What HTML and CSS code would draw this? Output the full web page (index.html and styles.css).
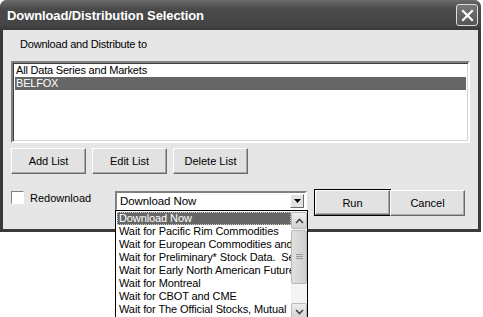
FILE: index.html
```html
<!DOCTYPE html>
<html lang="en">
<head>
    <meta charset="UTF-8">
    <title>Download/Distribution Selection</title>
    <link rel="stylesheet" href="styles.css">
</head>
<body>
    <div class="window">
        <div class="titlebar">
            <span class="title">Download/Distribution Selection</span>
            <div class="close">
                <svg width="13" height="13" viewBox="0 0 13 13"><path d="M2 2 L11 11 M11 2 L2 11" stroke="#fff" stroke-width="2.2" stroke-linecap="square"/></svg>
            </div>
        </div>
        <div class="content">
            <div class="label">Download and Distribute to</div>
            <div class="listbox">
                <div class="item">All Data Series and Markets</div>
                <div class="item selected">BELFOX</div>
            </div>
            <div class="list-buttons">
                <button>Add List</button>
                <button>Edit List</button>
                <button>Delete List</button>
            </div>
            <div class="bottom-row">
                <label class="check"><span class="box"></span>Redownload</label>
                <div class="combo">
                    <div class="combo-field">
                        <span>Download Now</span>
                        <span class="combo-btn">
                            <svg width="7" height="4" viewBox="0 0 7 4"><path d="M0 0 H7 L3.5 4 Z" fill="#000"/></svg>
                        </span>
                    </div>
                    <div class="dropdown">
                        <div class="options">
                            <div class="opt active">Download Now</div>
                            <div class="opt">Wait for Pacific Rim Commodities</div>
                            <div class="opt">Wait for European Commodities and</div>
                            <div class="opt">Wait for Preliminary* Stock Data.&nbsp; Se</div>
                            <div class="opt">Wait for Early North American Future</div>
                            <div class="opt">Wait for Montreal</div>
                            <div class="opt">Wait for CBOT and CME</div>
                            <div class="opt">Wait for The Official Stocks, Mutual</div>
                        </div>
                        <div class="scrollbar">
                            <div class="sb-btn">
                                <svg width="9" height="6" viewBox="0 0 9 6"><path d="M1 5 L4.5 1.5 L8 5" stroke="#444" stroke-width="1.6" fill="none"/></svg>
                            </div>
                            <div class="sb-thumb">
                                <svg width="7" height="6" viewBox="0 0 7 6"><path d="M0 0.5 H7 M0 2.5 H7 M0 4.5 H7" stroke="#999" stroke-width="1"/></svg>
                            </div>
                            <div class="sb-track"></div>
                            <div class="sb-btn">
                                <svg width="9" height="6" viewBox="0 0 9 6"><path d="M1 1 L4.5 4.5 L8 1" stroke="#444" stroke-width="1.6" fill="none"/></svg>
                            </div>
                        </div>
                    </div>
                </div>
                <button class="default">Run</button>
                <button>Cancel</button>
            </div>
        </div>
    </div>
</body>
</html>
```

FILE: styles.css
```css
html, body {
    margin: 0;
    min-height: 317px;
}
body {
    background-color: #fff;
    font-family: "Liberation Sans", Arial, sans-serif;
    font-size: 11px;
    color: #000;
}
.window {
    width: 475px;
    border: 3px solid #3a3a3a;
    border-top: none;
    border-radius: 7px 7px 0 0;
    background-color: #e6e6e6;
}
.titlebar {
    height: 30px;
    margin: 0 -3px;
    padding: 0 3px 0 7px;
    border-radius: 7px 7px 0 0;
    background: linear-gradient(#6a6a6a, #4a4a4a 30%, #454545 80%, #3a3a3a);
    display: flex;
    align-items: center;
    justify-content: space-between;
}
.title {
    color: #fff;
    font-weight: bold;
    font-size: 13px;
    letter-spacing: -0.1px;
}
.close {
    width: 20px;
    height: 20px;
    border: 1px solid #ddd;
    border-radius: 3px;
    background: linear-gradient(#777, #555);
    display: flex;
    align-items: center;
    justify-content: center;
}
.content {
    padding: 8px 8px 13px 8px;
}
.label {
    margin-left: 9px;
    height: 23px;
    letter-spacing: -0.2px;
}
.listbox {
    height: 76px;
    background-color: #fff;
    border: 2px solid;
    border-color: #808080 #fff #fff #808080;
    box-shadow: inset 1px 1px 0 #404040, inset -1px -1px 0 #d4d4d4;
    padding: 1px 2px;
    letter-spacing: -0.2px;
}
.item {
    height: 13px;
    line-height: 13px;
    padding-left: 1px;
}
.item.selected {
    background-color: #666;
    color: #fff;
}
.list-buttons {
    display: flex;
    gap: 6px;
    margin-top: 5px;
}
button {
    width: 75px;
    height: 26px;
    font-family: "Liberation Sans", Arial, sans-serif;
    font-size: 11px;
    color: #000;
    background-color: #e2e2e2;
    border: 1px solid;
    border-color: #fff #6a6a6a #6a6a6a #fff;
    box-shadow: inset -1px -1px 0 #a8a8a8;
    padding: 0;
}
button.default {
    height: 25px;
    outline: 1px solid #000;
    outline-offset: 0;
}
.bottom-row {
    display: flex;
    align-items: flex-start;
    margin-top: 16px;
}
.check {
    display: flex;
    align-items: center;
    gap: 6px;
    width: 104px;
    margin-top: 1px;
}
.box {
    width: 11px;
    height: 11px;
    background-color: #fff;
    border: 1px solid;
    border-color: #808080 #fff #fff #808080;
}
.combo {
    position: relative;
    width: 192px;
    margin-right: 8px;
    margin-top: 1px;
}
.combo-field {
    height: 16px;
    background-color: #fff;
    border: 2px solid;
    border-color: #808080 #fff #fff #808080;
    display: flex;
    align-items: center;
    justify-content: space-between;
    padding-left: 3px;
    font-size: 11.5px;
    letter-spacing: -0.1px;
}
.combo-btn {
    width: 14px;
    height: 14px;
    margin-right: 1px;
    background-color: #e2e2e2;
    border: 1px solid;
    border-color: #fff #6a6a6a #6a6a6a #fff;
    box-sizing: border-box;
    display: flex;
    align-items: center;
    justify-content: center;
}
.dropdown {
    position: absolute;
    left: 0;
    top: 19px;
    width: 191px;
    height: 110px;
    background-color: #fff;
    border: 1px solid #000;
    display: flex;
    font-size: 11px;
    letter-spacing: -0.1px;
    z-index: 2;
}
.options {
    flex: 1;
    padding: 1px 0 0 1px;
    overflow: hidden;
    white-space: nowrap;
}
.opt {
    height: 13px;
    line-height: 13px;
    padding-left: 2px;
}
.opt.active {
    background-color: #666;
    color: #fff;
    outline: 1px dotted #ccc;
    outline-offset: -1px;
}
.scrollbar {
    width: 16px;
    display: flex;
    flex-direction: column;
    background-color: #f4f4f4;
}
.sb-btn {
    height: 15px;
    margin: 1px 0;
    background: linear-gradient(#eee, #d0d0d0);
    border: 1px solid #bbb;
    border-radius: 2px;
    display: flex;
    align-items: center;
    justify-content: center;
}
.sb-thumb {
    height: 52px;
    background: linear-gradient(90deg, #e0e0e0, #cfcfcf);
    border: 1px solid #b8b8b8;
    border-radius: 2px;
    display: flex;
    align-items: center;
    justify-content: center;
}
.sb-track {
    flex: 1;
}
```
